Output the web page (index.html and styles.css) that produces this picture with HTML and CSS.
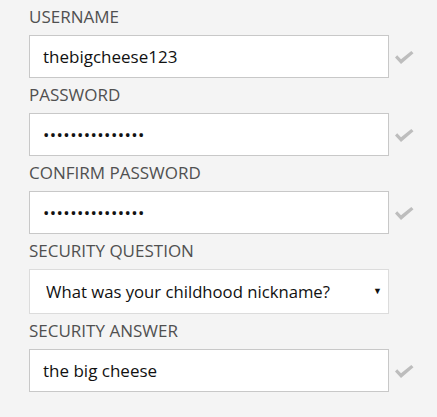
FILE: index.html
```html
<!DOCTYPE html>
<html>
<head>
	<title>Sign up</title>
	<link rel="stylesheet" href="styles.css">
</head>
<body>
<form class="signup">
	<div class="field">
		<label class="field-label" for="username">Username</label>
		<div class="field-row">
			<input class="field-input" id="username" type="text" value="thebigcheese123">
			<svg class="check" width="20" height="14" viewBox="0 0 20 14"><path d="M1 6.5 L3.2 4.3 L7 8.2 L17.3 0 L19.5 2.2 L7 13 Z" fill="#bdbdbd"/></svg>
		</div>
	</div>
	<div class="field">
		<label class="field-label" for="password">Password</label>
		<div class="field-row">
			<input class="field-input" id="password" type="password" value="cheeseburger123">
			<svg class="check" width="20" height="14" viewBox="0 0 20 14"><path d="M1 6.5 L3.2 4.3 L7 8.2 L17.3 0 L19.5 2.2 L7 13 Z" fill="#bdbdbd"/></svg>
		</div>
	</div>
	<div class="field">
		<label class="field-label" for="confirm">Confirm password</label>
		<div class="field-row">
			<input class="field-input" id="confirm" type="password" value="cheeseburger123">
			<svg class="check" width="20" height="14" viewBox="0 0 20 14"><path d="M1 6.5 L3.2 4.3 L7 8.2 L17.3 0 L19.5 2.2 L7 13 Z" fill="#bdbdbd"/></svg>
		</div>
	</div>
	<div class="field">
		<label class="field-label" for="question">Security question</label>
		<div class="field-row">
			<div class="select-wrap">
				<select class="field-select" id="question">
					<option>What was your childhood nickname?</option>
					<option>What is the name of your first pet?</option>
				</select>
				<span class="select-arrow">&#9660;</span>
			</div>
		</div>
	</div>
	<div class="field">
		<label class="field-label" for="answer">Security answer</label>
		<div class="field-row">
			<input class="field-input" id="answer" type="text" value="the big cheese">
			<svg class="check" width="20" height="14" viewBox="0 0 20 14"><path d="M1 6.5 L3.2 4.3 L7 8.2 L17.3 0 L19.5 2.2 L7 13 Z" fill="#bdbdbd"/></svg>
		</div>
	</div>
</form>
</body>
</html>
```

FILE: styles.css
```css
html, body {margin: 0; padding: 0; background: #f4f4f4;}
body {font-family: "Open Sans", "Noto Sans", sans-serif; color: #222;}

.signup {padding: 6px 0 0 29px; width: 390px;}

.field {display: flex; flex-direction: column;}
.field-label {display: block; font-size: 17px; line-height: 22px; margin-bottom: 7px; text-transform: uppercase; color: #505050;}
.field-row {display: flex; align-items: center; gap: 5px; margin-bottom: 6px;}

.field-input {box-sizing: border-box; width: 360px; height: 43px; margin: 0; padding: 0 13px; border: 1px solid #c8c8c8; background: #fff; font-family: "Open Sans", sans-serif; font-size: 17px; color: #111; outline: none;}
.field-input[type="password"] {letter-spacing: 0.4px;}
.check {flex: none; margin-top: 2px;}

.select-wrap {position: relative; width: 360px;}
.field-select {box-sizing: border-box; width: 360px; height: 45px; margin: 0; padding: 0 16px; border: 1px solid #dcdcdc; border-radius: 0; background: #fff; font-family: "Open Sans", sans-serif; font-size: 16.7px; color: #111; -webkit-appearance: none; appearance: none; outline: none;}
.select-arrow {position: absolute; right: 7px; top: 15px; font-size: 9px; color: #111; pointer-events: none;}
```
